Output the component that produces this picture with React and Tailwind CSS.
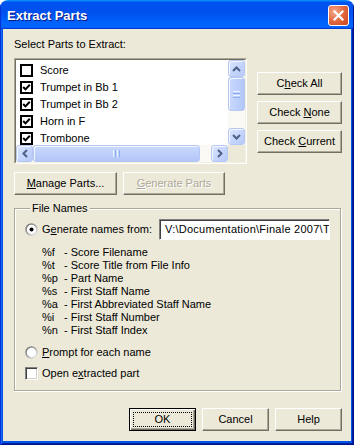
import React from "react";

const Up = () => (
  <svg width="9" height="6" viewBox="0 0 9 6"><polyline points="1,5 4.5,1.5 8,5" fill="none" stroke="#4D6185" strokeWidth="2" /></svg>
);
const Down = () => (
  <svg width="9" height="6" viewBox="0 0 9 6"><polyline points="1,1 4.5,4.5 8,1" fill="none" stroke="#4D6185" strokeWidth="2" /></svg>
);
const Left = () => (
  <svg width="6" height="9" viewBox="0 0 6 9"><polyline points="5,1 1.5,4.5 5,8" fill="none" stroke="#4D6185" strokeWidth="2" /></svg>
);
const Right = () => (
  <svg width="6" height="9" viewBox="0 0 6 9"><polyline points="1,1 4.5,4.5 1,8" fill="none" stroke="#4D6185" strokeWidth="2" /></svg>
);

const sbBtn =
  "w-[17px] h-[17px] shrink-0 rounded-[3px] border border-[#B5C7F2] bg-[linear-gradient(135deg,#DCE6FE,#C4D4FC_55%,#B7CBF8)] flex items-center justify-center shadow-[inset_1px_1px_0_#F2F6FF]";

const ListCheck = ({ checked }) => (
  <div className="w-[13px] h-[13px] shrink-0 border-2 border-black bg-white flex items-center justify-center">
    {checked && (
      <svg width="9" height="9" viewBox="0 0 9 9">
        <polyline points="1.2,4 3.5,6.4 7.8,1.8" fill="none" stroke="#000" strokeWidth="2" />
      </svg>
    )}
  </div>
);

const Radio = ({ checked }) => (
  <svg width="13" height="13" viewBox="0 0 13 13" className="shrink-0">
    <defs>
      <linearGradient id={checked ? "rg1" : "rg2"} x1="0" y1="0" x2="1" y2="1">
        <stop offset="0" stopColor="#6E6E6E" />
        <stop offset="0.5" stopColor="#A8A8A8" />
        <stop offset="1" stopColor="#F4F4F4" />
      </linearGradient>
    </defs>
    <circle cx="6.5" cy="6.5" r="5.5" fill="#fff" stroke={checked ? "url(#rg1)" : "url(#rg2)"} strokeWidth="1.6" />
    {checked && <circle cx="6.5" cy="6.5" r="2" fill="#000" />}
  </svg>
);

const btn =
  "h-[23px] bg-[#ECE9D8] border border-t-white border-l-white border-r-[#716F64] border-b-[#716F64] shadow-[inset_-1px_-1px_0_#ACA899] flex items-center justify-center";

const items = [
  ["Score", false],
  ["Trumpet in Bb 1", true],
  ["Trumpet in Bb 2", true],
  ["Horn in F", true],
  ["Trombone", true],
];

const codes = [
  ["%f", "- Score Filename"],
  ["%t", "- Score Title from File Info"],
  ["%p", "- Part Name"],
  ["%s", "- First Staff Name"],
  ["%a", "- First Abbreviated Staff Name"],
  ["%i", "- First Staff Number"],
  ["%n", "- First Staff Index"],
];

export default function App() {
  return (
    <div className="w-[354px] h-[445px] bg-white font-['Liberation_Sans',Arial,sans-serif] text-[11px] leading-[13px] text-black">
      <div className="w-full h-full rounded-t-[8px] overflow-hidden flex flex-col">
        {/* Title bar */}
        <div className="h-[29px] shrink-0 flex items-center justify-between pl-[7px] pr-[5px] pt-[2px] bg-[linear-gradient(180deg,#0997FF,#0053EE_8%,#0050EE_40%,#0066FF_88%,#0066FF_93%,#005BFF_95%,#003DD7_96%,#003DD7)] shadow-[inset_1px_0_0_#0831D9,inset_-1px_0_0_#00138C]">
          <span className="text-white font-bold text-[13px] leading-[16px] [text-shadow:1px_1px_0_#0A1883]">Extract Parts</span>
          <div className="w-[21px] h-[21px] rounded-[3px] border border-white bg-[radial-gradient(circle_at_30%_30%,#F3A98F,#E46C45_45%,#C9431B)] flex items-center justify-center">
            <svg width="11" height="11" viewBox="0 0 11 11">
              <path d="M1.5 1.5 L9.5 9.5 M9.5 1.5 L1.5 9.5" stroke="#fff" strokeWidth="2.2" strokeLinecap="square" />
            </svg>
          </div>
        </div>
        {/* Frame */}
        <div className="flex-1 flex pl-[3px] pr-[4px] pb-[4px] bg-[#0055E5] shadow-[inset_1px_0_0_#0831D9,inset_-1px_-1px_0_#00138C,inset_2px_0_0_#166AEE,inset_-2px_-2px_0_#001EA0]">
          <div className="flex-1 bg-[#ECE9D8] pl-[11px] pr-[9px] pt-[9px] flex flex-col">
            <div>Select Parts to Extract:</div>
            <div className="flex mt-[7px]">
              {/* List box */}
              <div className="w-[233px] h-[106px] border border-t-[#ACA899] border-l-[#ACA899] border-r-white border-b-white">
                <div className="w-full h-full border border-t-[#716F64] border-l-[#716F64] border-r-[#F1EFE2] border-b-[#F1EFE2] bg-white flex flex-col">
                  <div className="flex flex-1 min-h-0">
                    <div className="flex-1 overflow-hidden pt-[2px]">
                      {items.map(([name, c]) => (
                        <div key={name} className="flex items-center h-[17px] pl-[4px] gap-[7px] whitespace-nowrap">
                          <ListCheck checked={c} />
                          <span>{name}</span>
                        </div>
                      ))}
                    </div>
                    {/* vertical scrollbar */}
                    <div className="w-[17px] flex flex-col bg-[#FAF9F4]">
                      <div className={sbBtn}><Up /></div>
                      <div className="flex-1 flex flex-col">
                        <div className="h-[34px] rounded-[3px] border border-[#B5C7F2] bg-[linear-gradient(90deg,#C9D8FD,#BCCFFB_60%,#B2C6F6)] shadow-[inset_1px_1px_0_#F2F6FF] flex flex-col items-center justify-center gap-[1px]">
                          <div className="w-[7px] h-[1px] bg-[#EEF4FE]" />
                          <div className="w-[7px] h-[1px] bg-[#8CB0F8]" />
                          <div className="w-[7px] h-[1px] bg-[#EEF4FE]" />
                          <div className="w-[7px] h-[1px] bg-[#8CB0F8]" />
                        </div>
                      </div>
                      <div className={sbBtn}><Down /></div>
                    </div>
                  </div>
                  {/* horizontal scrollbar */}
                  <div className="h-[17px] flex shrink-0">
                    <div className="flex-1 flex bg-[#FAF9F4]">
                      <div className={sbBtn}><Left /></div>
                      <div className="w-[167px] h-[17px] rounded-[3px] border border-[#B5C7F2] bg-[linear-gradient(180deg,#C9D8FD,#BCCFFB_60%,#B2C6F6)] shadow-[inset_1px_1px_0_#F2F6FF] flex items-center justify-center gap-[1px]">
                        <div className="w-[1px] h-[7px] bg-[#EEF4FE]" />
                        <div className="w-[1px] h-[7px] bg-[#8CB0F8]" />
                        <div className="w-[1px] h-[7px] bg-[#EEF4FE]" />
                        <div className="w-[1px] h-[7px] bg-[#8CB0F8]" />
                      </div>
                      <div className="flex-1" />
                      <div className={sbBtn}><Right /></div>
                    </div>
                    <div className="w-[17px] bg-[#ECE9D8]" />
                  </div>
                </div>
              </div>
              {/* right buttons */}
              <div className="ml-[10px] pt-[14px] flex flex-col gap-[6px]">
                <div className={btn + " w-[85px]"}><span>C<u>h</u>eck All</span></div>
                <div className={btn + " w-[85px]"}><span>Check <u>N</u>one</span></div>
                <div className={btn + " w-[85px]"}><span>Check <u>C</u>urrent</span></div>
              </div>
            </div>
            <div className="flex gap-[6px] mt-[8px]">
              <div className={btn + " w-[103px]"}><span><u>M</u>anage Parts...</span></div>
              <div className={btn + " w-[102px]"}><span className="text-[#ACA899] [text-shadow:1px_1px_0_#fff]"><u>G</u>enerate Parts</span></div>
            </div>
            {/* group box */}
            <fieldset className="mt-[7px] w-[327px] border border-[#ACA899] shadow-[inset_1px_1px_0_#fff,1px_1px_0_#fff] pl-[10px] pr-[10px] pb-[9px]">
              <legend className="ml-[5px] px-[2px] bg-[#ECE9D8]">File Names</legend>
              <div className="flex items-center h-[21px] mt-[4px]">
                <div className="flex items-center gap-[4px]">
                  <Radio checked />
                  <span>G<u>e</u>nerate names from:</span>
                </div>
                <div className="ml-auto w-[171px] h-[21px] border border-t-[#808080] border-l-[#808080] border-r-white border-b-white shadow-[inset_1px_1px_0_#404040] bg-white overflow-hidden whitespace-nowrap pl-[5px] leading-[19px] tracking-[0.25px]">
                  {"V:\\Documentation\\Finale 2007\\Tutorials"}
                </div>
              </div>
              <div className="mt-[6px] pl-[17px] grid grid-cols-[22px_1fr]">
                {codes.map(([c, t]) => (
                  <React.Fragment key={c}>
                    <div>{c}</div>
                    <div>{t}</div>
                  </React.Fragment>
                ))}
              </div>
              <div className="flex items-center h-[16px] mt-[7px] gap-[4px]">
                <Radio />
                <span><u>P</u>rompt for each name</span>
              </div>
              <div className="flex items-center h-[16px] mt-[5px] gap-[4px]">
                <div className="w-[13px] h-[13px] border border-t-[#808080] border-l-[#808080] border-r-white border-b-white shadow-[inset_1px_1px_0_#404040,inset_-1px_-1px_0_#D4D0C8] bg-white" />
                <span>Open e<u>x</u>tracted part</span>
              </div>
            </fieldset>
            <div className="flex justify-end gap-[6px] mt-[17px]">
              <div className="w-[67px] h-[23px] border border-black bg-[#ECE9D8] p-[3px] shadow-[inset_1px_1px_0_#fff,inset_-1px_-1px_0_#716F64,inset_-2px_-2px_0_#ACA899]">
                <div className="w-full h-full border border-dotted border-black flex items-center justify-center">OK</div>
              </div>
              <div className={btn + " w-[67px]"}>Cancel</div>
              <div className={btn + " w-[67px]"}>Help</div>
            </div>
          </div>
        </div>
      </div>
    </div>
  );
}
